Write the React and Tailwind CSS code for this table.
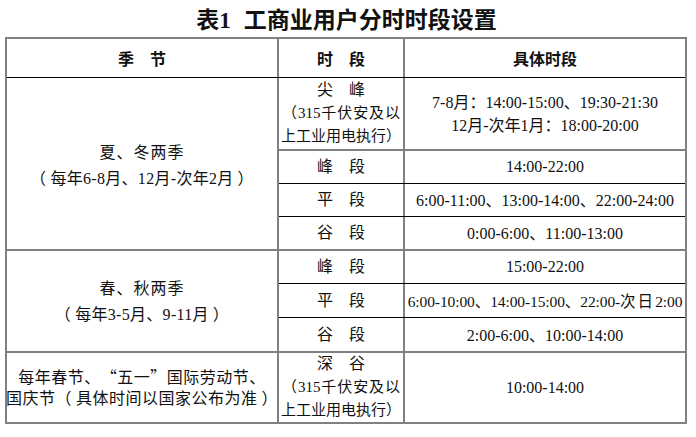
import React from "react";

function Sub({ h, border, label, children }) {
  return (
    <div className={`flex ${h} ${border}`}>
      <div className="w-[126px] shrink-0 border-r-2 border-[#808080] flex flex-col items-center justify-center">
        {label}
      </div>
      <div className="flex-1 flex flex-col items-center justify-center text-center whitespace-nowrap">
        {children}
      </div>
    </div>
  );
}

const Dun = () => <span className="font-['Noto_Sans_CJK_SC',sans-serif]">、</span>;
const L = () => <span className="pr-[4px]">（</span>;
const R = () => <span className="pl-[4px]">）</span>;

function LongLabel({ first }) {
  return (
    <div className="w-full flex flex-col items-center leading-[23.5px]">
      <div>{first}</div>
      <div className="w-full px-[3px] text-[15px] [text-align-last:justify] whitespace-nowrap">（315千伏安及以</div>
      <div className="w-full px-[2px] text-[15px] [text-align-last:justify] whitespace-nowrap">上工业用电执行）</div>
    </div>
  );
}

export default function App() {
  return (
    <div className="w-[696px] h-[437px] bg-white text-[#111] text-[16px] leading-[24px] [text-spacing-trim:space-all] font-['Liberation_Serif','Noto_Sans_CJK_SC',serif]">
      <div className="h-[37px] flex items-center justify-center pt-[3px] pr-[3px] text-[23px] leading-none font-bold">
        <span>表1</span>
        <span className="ml-[13px]">工商业用户分时时段设置</span>
      </div>
      <div className="ml-[5px] w-[682px] border-2 border-[#808080]">
        {/* header */}
        <div className="flex h-[39px] border-b border-black font-bold font-['Noto_Sans_CJK_SC',sans-serif] text-[16px]">
          <div className="w-[272px] shrink-0 border-r-2 border-[#808080] flex items-center justify-center">季　节</div>
          <div className="w-[126px] shrink-0 border-r-2 border-[#808080] flex items-center justify-center">时　段</div>
          <div className="flex-1 flex items-center justify-center">具体时段</div>
        </div>

        {/* summer / winter */}
        <div className="flex border-b-2 border-[#808080]">
          <div className="w-[272px] shrink-0 border-r-2 border-[#808080] flex flex-col items-center justify-center text-center pt-[3px] tracking-[0.3px]">
            <div className="tracking-[1px]">夏<Dun />冬两季</div>
            <div><L />每年6-8月<Dun />12月-次年2月<R /></div>
          </div>
          <div className="flex-1 flex flex-col">
            <Sub h="h-[73px]" border="border-b-2 border-[#808080]" label={<LongLabel first="尖　峰" />}>
              <div className="leading-[23px]">7-8月：14:00-15:00<Dun />19:30-21:30</div>
              <div className="leading-[23px]">12月-次年1月：18:00-20:00</div>
            </Sub>
            <Sub h="h-[33px]" border="border-b border-black" label="峰　段">
              <div>14:00-22:00</div>
            </Sub>
            <Sub h="h-[33px]" border="border-b border-black" label="平　段">
              <div>6:00-11:00<Dun />13:00-14:00<Dun />22:00-24:00</div>
            </Sub>
            <Sub h="h-[32px]" border="" label="谷　段">
              <div>0:00-6:00<Dun />11:00-13:00</div>
            </Sub>
          </div>
        </div>

        {/* spring / autumn */}
        <div className="flex border-b-2 border-[#808080]">
          <div className="w-[272px] shrink-0 border-r-2 border-[#808080] flex flex-col items-center justify-center text-center tracking-[0.3px]">
            <div className="tracking-[1px]">春<Dun />秋两季</div>
            <div><L />每年3-5月<Dun />9-11月<R /></div>
          </div>
          <div className="flex-1 flex flex-col">
            <Sub h="h-[33px]" border="border-b border-black" label="峰　段">
              <div>15:00-22:00</div>
            </Sub>
            <Sub h="h-[34px]" border="border-b border-black" label="平　段">
              <div className="text-[15.5px] tracking-[-0.1px]">
                6:00-10:00<Dun />14:00-15:00<Dun />22:00-<span className="tracking-[2px]">次日</span>2:00
              </div>
            </Sub>
            <Sub h="h-[33px]" border="" label="谷　段">
              <div>2:00-6:00<Dun />10:00-14:00</div>
            </Sub>
          </div>
        </div>

        {/* holidays */}
        <div className="flex h-[69px]">
          <div className="w-[272px] shrink-0 border-r-2 border-[#808080] flex flex-col items-center justify-center text-center leading-[21px] whitespace-nowrap tracking-[0.5px]">
            <div>
              每年春节<Dun />
              <span className="font-['Noto_Sans_CJK_SC',sans-serif]">“五一”</span>国际劳动节<Dun />
            </div>
            <div>国庆节<L />具体时间以国家公布为准<R /></div>
          </div>
          <div className="w-[126px] shrink-0 border-r-2 border-[#808080] flex flex-col items-center justify-center">
            <LongLabel first="深　谷" />
          </div>
          <div className="flex-1 flex items-center justify-center">10:00-14:00</div>
        </div>
      </div>
    </div>
  );
}
